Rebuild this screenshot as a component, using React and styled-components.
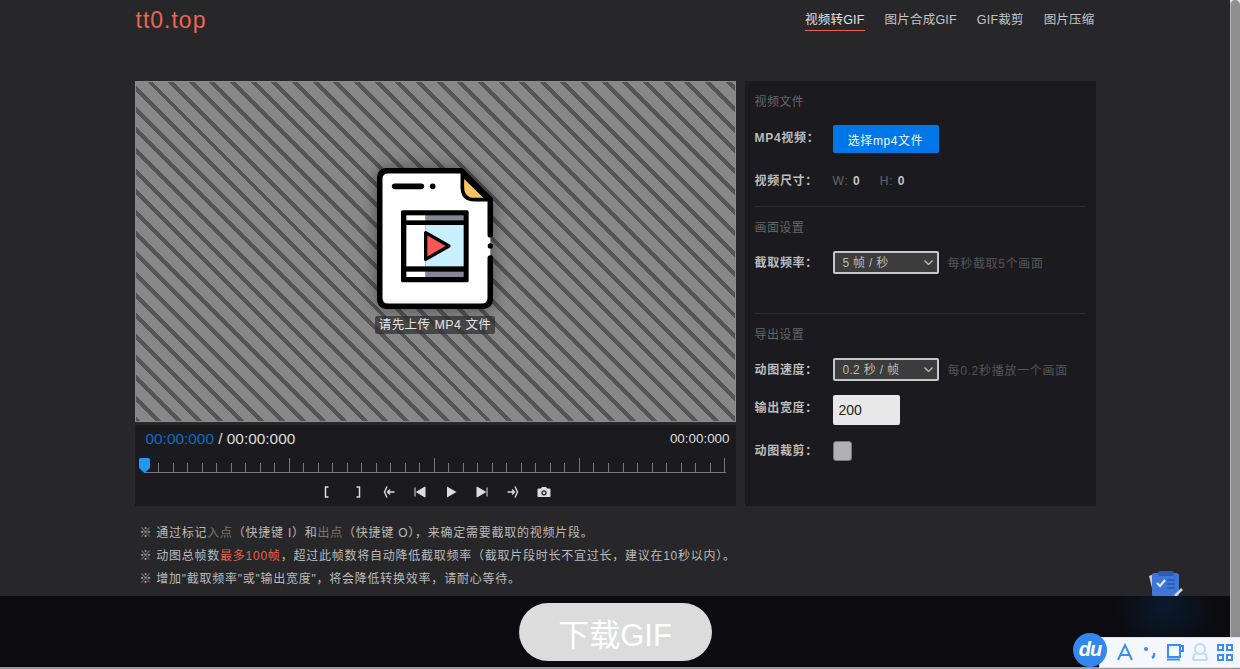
import styled, { createGlobalStyle } from "styled-components";

const GlobalStyle = createGlobalStyle`
  * { box-sizing: border-box; }
  html, body { margin: 0; height: 100%; overflow: hidden; background: #27272a; }
  body { font-family: "Liberation Sans", "Noto Sans CJK SC", sans-serif; }
`;

const navItems = ["视频转GIF", "图片合成GIF", "GIF裁剪", "图片压缩"];
const ticks = Array.from({ length: 41 }, (_, i) => i);

const chevron = encodeURIComponent(
  '<svg xmlns="http://www.w3.org/2000/svg" width="9" height="5" viewBox="0 0 9 5"><path d="M.5 .5L4.5 4.5L8.5 .5" fill="none" stroke="#bbb" stroke-width="1.3"/></svg>'
);

function FileIcon() {
  return (
    <svg width="116" height="141" viewBox="112 55 348 423">
      <path d="M365 63H145Q120 63 120 88V445Q120 470 145 470H425Q452 470 452 445V150L365 63Z" fill="#fff" />
      <path d="M128 450H444V445Q444 462 425 462H145Q128 462 128 445Z" fill="#f4f4f6" />
      <path d="M452 325V445Q452 470 425 470H145Q120 470 120 445V88Q120 63 145 63H365L452 150V255" fill="none" stroke="#000" strokeWidth="17" strokeLinecap="round" strokeLinejoin="round" />
      <circle cx="452" cy="289" r="8" fill="#000" />
      <path d="M368 75L445 150H405Q368 150 368 112Z" fill="#fdc55f" stroke="#000" strokeWidth="11" strokeLinejoin="round" />
      <path d="M165 110H245" stroke="#000" strokeWidth="17" strokeLinecap="round" />
      <circle cx="279" cy="110" r="8.5" fill="#000" />
      <rect x="184" y="182" width="203" height="216" rx="5" fill="#000" />
      <rect x="200" y="197" width="58" height="15" fill="#fff" />
      <rect x="258" y="197" width="114" height="15" fill="#86869a" />
      <rect x="200" y="226" width="58" height="124" fill="#fff" />
      <rect x="258" y="226" width="114" height="124" fill="#c8effd" />
      <rect x="200" y="366" width="58" height="16" fill="#fff" />
      <rect x="258" y="366" width="114" height="16" fill="#86869a" />
      <path d="M258 249L328 289L258 329Z" fill="#fb5757" stroke="#000" strokeWidth="10" strokeLinejoin="round" />
    </svg>
  );
}

const ctrlIcons = [
  <path key="a" d="M8.5 2H5.5V12H8.5" fill="none" stroke="currentColor" strokeWidth="1.5" />,
  <path key="b" d="M5.5 2H8.5V12H5.5" fill="none" stroke="currentColor" strokeWidth="1.5" />,
  <path key="c" d="M5 1.5L2.5 7L5 12.5M12.5 7H5.5M8 4.5L5.5 7L8 9.5" fill="none" stroke="currentColor" strokeWidth="1.4" />,
  <path key="d" d="M2 2.5V11.5M12 2V12L3.5 7Z" fill="currentColor" stroke="currentColor" strokeWidth="1" />,
  <path key="e" d="M3 1.5L12.5 7L3 12.5Z" fill="currentColor" />,
  <path key="f" d="M12 2.5V11.5M2 2V12L10.5 7Z" fill="currentColor" stroke="currentColor" strokeWidth="1" />,
  <path key="g" d="M9 1.5L11.5 7L9 12.5M1.5 7H8.5M6 4.5L8.5 7L6 9.5" fill="none" stroke="currentColor" strokeWidth="1.4" />,
  <path key="h" fillRule="evenodd" d="M1.5 3.5H4L5 2H9L10 3.5H12.5Q13.5 3.5 13.5 4.5V11Q13.5 12 12.5 12H1.5Q.5 12 .5 11V4.5Q.5 3.5 1.5 3.5ZM7 5.2A2.6 2.6 0 1 0 7 10.4A2.6 2.6 0 1 0 7 5.2ZM7 6.4A1.4 1.4 0 1 1 7 9.2A1.4 1.4 0 1 1 7 6.4Z" fill="currentColor" />,
];

export default function App() {
  return (
    <Page>
      <GlobalStyle />
      <Main>
        <Header>
          <Logo>tt0.top</Logo>
          <Nav>
            {navItems.map((item, i) => (
              <NavItem key={item} $active={i === 0}>{item}</NavItem>
            ))}
          </Nav>
        </Header>

        <Work>
          <LeftCol>
            <Stage>
              <FileIcon />
              <StageLabel>请先上传 MP4 文件</StageLabel>
            </Stage>
            <Player>
              <TimeRow>
                <span><CurTime>00:00:000</CurTime> / 00:00:000</span>
                <TotalTime>00:00:000</TotalTime>
              </TimeRow>
              <Ruler>
                {ticks.map((t) => <Tick key={t} $major={t % 10 === 0} />)}
                <Handle viewBox="0 0 11 15">
                  <path d="M1.5 0H9.5Q11 0 11 1.5V10L5.5 15L0 10V1.5Q0 0 1.5 0Z" fill="#2196f3" />
                </Handle>
              </Ruler>
              <Ctrls>
                {ctrlIcons.map((icon, i) => (
                  <CtrlBtn key={i}><svg width="14" height="14" viewBox="0 0 14 14">{icon}</svg></CtrlBtn>
                ))}
              </Ctrls>
            </Player>
          </LeftCol>

          <Side>
            <SideTitle>视频文件</SideTitle>
            <TopRow>
              <Label>MP4视频：</Label>
              <PickBtn>选择mp4文件</PickBtn>
            </TopRow>
            <Row $gap={16}>
              <Label>视频尺寸：</Label>
              <Dim>W:<b>0</b></Dim>
              <Dim>H:<b>0</b></Dim>
            </Row>
            <Divider $gap={14} />
            <SideTitle>画面设置</SideTitle>
            <Row>
              <Label>截取频率：</Label>
              <Select defaultValue="5"><option value="5">5 帧 / 秒</option></Select>
              <Hint>每秒截取5个画面</Hint>
            </Row>
            <Divider $gap={39} />
            <SideTitle>导出设置</SideTitle>
            <Row>
              <Label>动图速度：</Label>
              <Select defaultValue="0.2"><option value="0.2">0.2 秒 / 帧</option></Select>
              <Hint>每0.2秒播放一个画面</Hint>
            </Row>
            <TopRow>
              <Label>输出宽度：</Label>
              <WidthInput defaultValue="200" />
            </TopRow>
            <Row>
              <Label>动图裁剪：</Label>
              <Check />
            </Row>
          </Side>
        </Work>

        <Notes>
          <p>※ 通过标记<Dimmed>入点</Dimmed>（快捷键 I）和<Dimmed>出点</Dimmed>（快捷键 O），来确定需要截取的视频片段。</p>
          <p>※ 动图总帧数<Red>最多100帧</Red>，超过此帧数将自动降低截取频率（截取片段时长不宜过长，建议在10秒以内）。</p>
          <p>※ 增加"截取频率"或"输出宽度"，将会降低转换效率，请耐心等待。</p>
        </Notes>

        <Footer>
          <DownloadBtn>下载GIF</DownloadBtn>
        </Footer>
        <BottomLine />
      </Main>
      <Scrollbar><ScrollThumb /></Scrollbar>

      <NoteWidget width="36" height="26" viewBox="0 0 36 26">
        <path d="M1 6L8 3H28V26H6Z" fill="#c9ccd2" />
        <rect x="4" y="3" width="27" height="24" rx="3" fill="#3f77d6" />
        <rect x="10" y="1" width="16" height="5" rx="2" fill="#2c5cb4" />
        <path d="M9 13L12 16L17 10" fill="none" stroke="#e4ecfa" strokeWidth="2" />
        <path d="M19 10H27M19 14H27M19 18H27" stroke="#2c5cb4" strokeWidth="1.5" />
        <path d="M27 26L34 19" stroke="#d8d8d8" strokeWidth="2.5" />
      </NoteWidget>

      <DuBar>
        <DuLogo>du</DuLogo>
        <DuTray>
          <svg width="140" height="29" viewBox="0 0 140 29">
            <path d="M18 22L25 7L32 22M20.5 17H29.5" fill="none" stroke="#3b8df0" strokeWidth="2" />
            <circle cx="46" cy="11" r="2" fill="#3b8df0" />
            <path d="M54 15Q55 18 52 20" fill="none" stroke="#3b8df0" strokeWidth="2.2" />
            <path d="M68 7H80V19H68ZM80 8H83V13H80M67 21.5H80" fill="none" stroke="#3b8df0" strokeWidth="2" />
            <circle cx="100" cy="11" r="5" fill="none" stroke="#c0d9f8" strokeWidth="2" />
            <path d="M93 22Q93 17 96 15.5M107 22Q107 17 104 15.5M93 22H107" fill="none" stroke="#c0d9f8" strokeWidth="2" />
            <path d="M118 7H123V12H118ZM127 7H132V12H127ZM118 17H123V22H118ZM127 17H132V22H127Z" fill="none" stroke="#3b8df0" strokeWidth="2" />
          </svg>
        </DuTray>
      </DuBar>
    </Page>
  );
}

const Page = styled.div`
  display: flex;
  height: 669px;
  position: relative;
  overflow: hidden;
`;

const Main = styled.div`
  width: 1230px;
  display: flex;
  flex-direction: column;
`;

const Scrollbar = styled.div`
  width: 10px;
  background: #e8e8e8;
`;

const ScrollThumb = styled.div`
  height: 100%;
  background: #8e8e8e;
  border-left: 1px solid #b4b4b4;
  border-radius: 5px 5px 0 0;
`;

const Header = styled.header`
  width: 961px;
  height: 81px;
  margin: 0 auto;
  padding: 0 1px 0 1px;
  display: flex;
  justify-content: space-between;
  align-items: flex-start;
`;

const Logo = styled.div`
  font-size: 23px;
  line-height: 40px;
  color: #ea6552;
  letter-spacing: 1px;
`;

const Nav = styled.nav`
  display: flex;
  gap: 20px;
  padding-top: 11px;
`;

const NavItem = styled.a`
  font-size: 12.5px;
  line-height: 18px;
  height: 20px;
  letter-spacing: .2px;
  color: ${(p) => (p.$active ? "#e2e2e2" : "#c4c4c4")};
  border-bottom: ${(p) => (p.$active ? "1.5px solid #e9604f" : "none")};
`;

const Work = styled.section`
  width: 961px;
  margin: 0 auto;
  display: flex;
  gap: 9px;
`;

const LeftCol = styled.div`
  width: 601px;
  display: flex;
  flex-direction: column;
  gap: 3px;
`;

const Stage = styled.div`
  height: 341px;
  background: repeating-linear-gradient(45deg, #555 0 3.5px, #888 3.5px 13.9px, #555 13.9px 14.6px);
  border: 1px solid #8c8c8c;
  display: flex;
  flex-direction: column;
  align-items: center;
  padding-top: 86px;
  gap: 7px;
  svg { filter: drop-shadow(0 0 8px rgba(0, 0, 0, .45)); }
`;

const StageLabel = styled.div`
  font-size: 12.5px;
  line-height: 18px;
  letter-spacing: .45px;
  padding: 0 4px;
  color: #e8e8e8;
  background: rgba(50, 50, 50, .75);
  border-radius: 2px;
`;

const Player = styled.div`
  height: 81px;
  background: #1b1b1f;
  padding: 5px 6px 0 9px;
`;

const TimeRow = styled.div`
  display: flex;
  justify-content: space-between;
  align-items: center;
  padding-left: 2px;
  font-size: 15.4px;
  line-height: 18px;
  color: #ddd;
`;

const CurTime = styled.span`
  color: #0a6cc4;
`;

const TotalTime = styled.span`
  font-size: 13.4px;
`;

const Ruler = styled.div`
  position: relative;
  height: 14px;
  width: 582px;
  margin-top: 10px;
  display: flex;
  justify-content: space-between;
  align-items: flex-end;
  border-bottom: 1px solid #777;
  box-sizing: content-box;
`;

const Tick = styled.i`
  width: 1px;
  height: ${(p) => (p.$major ? "14px" : "9px")};
  background: #777;
`;

const Handle = styled.svg`
  position: absolute;
  left: -5px;
  top: 0;
  width: 11px;
  height: 15px;
`;

const Ctrls = styled.div`
  display: flex;
  justify-content: center;
  margin: 12px 0 0 -9px;
  width: 601px;
`;

const CtrlBtn = styled.button`
  width: 31px;
  height: 14px;
  padding: 0;
  border: 0;
  background: none;
  color: #ddd;
  display: flex;
  justify-content: center;
`;

const Side = styled.aside`
  width: 351px;
  height: 425px;
  background: #1b1b1f;
  padding: 10px;
`;

const SideTitle = styled.div`
  height: 20px;
  font-size: 12px;
  line-height: 22px;
  letter-spacing: .4px;
  color: #666;
`;

const Row = styled.div`
  display: flex;
  align-items: center;
  margin-top: ${(p) => p.$gap || 14}px;
`;

const Label = styled.label`
  width: 78px;
  height: 23px;
  flex: none;
  font-size: 12px;
  font-weight: 700;
  line-height: 25px;
  letter-spacing: .7px;
  color: #bcbcbc;
`;

const TopRow = styled(Row)`
  align-items: flex-start;
  ${Label} { line-height: 27px; }
`;

const PickBtn = styled.button`
  width: 106px;
  height: 28px;
  border: 0;
  border-radius: 2px;
  background: #0077e8;
  color: #f2f7ff;
  font: 12px "Liberation Sans", "Noto Sans CJK SC", sans-serif;
  letter-spacing: .6px;
`;

const Dim = styled.span`
  font-size: 12px;
  letter-spacing: 1px;
  color: #666;
  margin-right: 19px;
  b { color: #c4c4c4; margin-left: 4px; }
`;

const Divider = styled.div`
  border-top: 1px solid #2c2c30;
  margin: ${(p) => p.$gap}px 0 10px;
`;

const Select = styled.select`
  width: 106px;
  height: 23px;
  flex: none;
  appearance: none;
  background: #3c3c3c url("data:image/svg+xml,${chevron}") no-repeat right 4px center;
  border: 2px solid #c8c8c8;
  border-radius: 2px;
  color: #bbb;
  padding-left: 8px;
  font: 12px "Liberation Sans", "Noto Sans CJK SC", sans-serif;
  letter-spacing: .3px;
`;

const Hint = styled.span`
  margin-left: 9px;
  font-size: 12px;
  letter-spacing: .7px;
  color: #555;
`;

const WidthInput = styled.input`
  width: 67px;
  height: 30px;
  border: 0;
  border-radius: 2px;
  background: #e8e8e8;
  color: #222;
  padding: 0 6px;
  font: 14px "Liberation Sans", sans-serif;
`;

const Check = styled.div`
  width: 19px;
  height: 20px;
  background: #b0b0b0;
  border: 1px solid #777;
  border-radius: 3px;
`;

const Notes = styled.div`
  width: 961px;
  margin: 16px auto 0;
  padding-left: 5px;
  flex: 1;
  font-size: 12px;
  line-height: 23px;
  letter-spacing: .75px;
  color: #bbb;
  p { margin: 0; }
`;

const Dimmed = styled.span`
  color: #77776c;
`;

const Red = styled.span`
  color: #e9604f;
`;

const Footer = styled.footer`
  height: 71px;
  background: radial-gradient(ellipse 50px 46px at 1165px 10px, #0a1a2e, transparent), #0c0c10;
  display: flex;
  justify-content: center;
  align-items: center;
`;

const BottomLine = styled.div`
  height: 2px;
  background: #9a9a9a;
`;

const DownloadBtn = styled.button`
  width: 193px;
  height: 58px;
  margin-top: 1px;
  border: 0;
  border-radius: 29px;
  background: #dcdcdc;
  color: #fff;
  font: 31px "Liberation Sans", "Noto Sans CJK SC", sans-serif;
`;

const NoteWidget = styled.svg`
  position: absolute;
  left: 1148px;
  top: 570px;
`;

const DuBar = styled.div`
  position: absolute;
  left: 1073px;
  top: 633px;
  width: 167px;
  height: 34px;
  display: flex;
  align-items: flex-start;
`;

const DuLogo = styled.div`
  position: relative;
  z-index: 1;
  flex: none;
  width: 34px;
  height: 34px;
  border-radius: 50%;
  background: #3388f0;
  color: #fff;
  font: italic 700 20px/32px "Liberation Sans", sans-serif;
  letter-spacing: -1px;
  text-align: center;
`;

const DuTray = styled.div`
  flex: none;
  width: 140px;
  height: 29px;
  margin: 5px 0 0 -7px;
  background: #f4f8fe;
  box-shadow: 0 0 0 1px #d4e4fa;
`;
